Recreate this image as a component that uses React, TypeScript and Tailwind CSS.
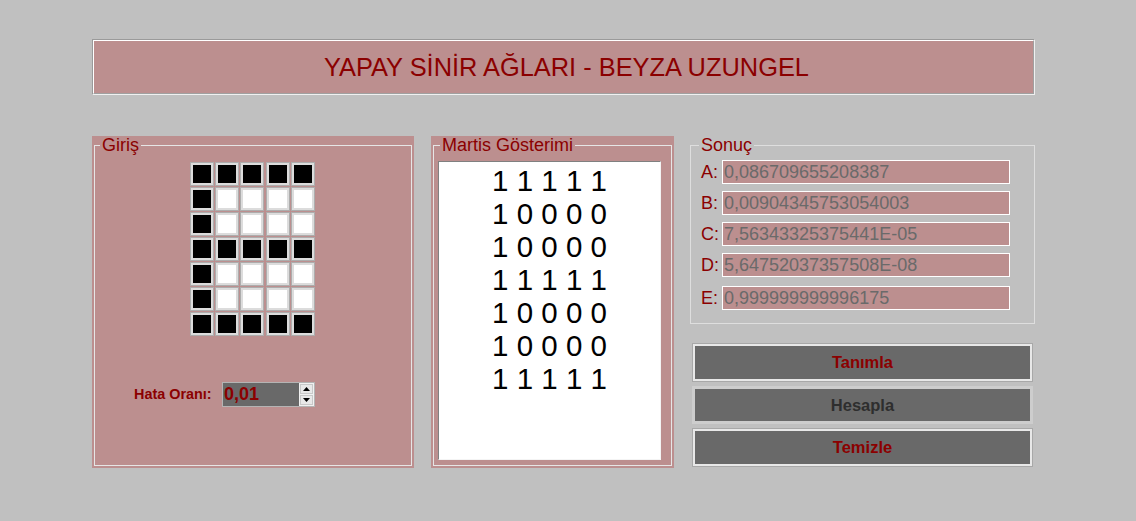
const font = { fontFamily: '"Liberation Sans", Arial, sans-serif' };

// E harfi: 1 = siyah, 0 = beyaz
const pattern = [
  [1, 1, 1, 1, 1],
  [1, 0, 0, 0, 0],
  [1, 0, 0, 0, 0],
  [1, 1, 1, 1, 1],
  [1, 0, 0, 0, 0],
  [1, 0, 0, 0, 0],
  [1, 1, 1, 1, 1],
];

const results = [
  { key: 'A', value: '0,086709655208387', gap: 'mt-[6px]' },
  { key: 'B', value: '0,00904345753054003', gap: 'mt-[7px]' },
  { key: 'C', value: '7,56343325375441E-05', gap: 'mt-[7px]' },
  { key: 'D', value: '5,64752037357508E-08', gap: 'mt-[7px]' },
  { key: 'E', value: '0,999999999996175', gap: 'mt-[9px]' },
];

function Cell({ on }: { on: number }) {
  return (
    <div className="w-[24px] h-[24px] border border-[#adadad] bg-[#dcdcdc] p-[2px]">
      <div className={on ? 'w-full h-full bg-black' : 'w-full h-full bg-white'} />
    </div>
  );
}

export default function App() {
  return (
    <div className="w-[1136px] h-[521px] bg-[#c0c0c0] pt-[39px] pl-[92px]" style={font}>
      {/* başlık */}
      <div className="w-[943px] h-[56px] border border-[#9a9a9a] border-b-[#f0f0f0] border-r-[#f0f0f0]">
        <div className="w-full h-full border border-white border-b-[#a0a0a0] border-r-[#a0a0a0] bg-[#bc8f8f] flex items-center justify-center">
          <h1 className="text-[25.4px] leading-none text-[#8b0000] mt-[2px] ml-[6px]">YAPAY SİNİR AĞLARI - BEYZA UZUNGEL</h1>
        </div>
      </div>

      <div className="flex items-start mt-[41px]">
        {/* Giriş */}
        <div className="w-[322px] h-[332px] bg-[#bc8f8f] px-[2px] pb-[2px]">
          <fieldset className="h-full border border-[#e6e6e6]">
            <legend className="ml-[5px] px-[2px] text-[18px] leading-[18px] text-[#8b0000]">Giriş</legend>
            <div className="ml-[95px] mt-[8px] grid grid-cols-5 w-[125px] gap-px">
              {pattern.flat().map((v, i) => (
                <Cell key={i} on={v} />
              ))}
            </div>
            <div className="flex items-center ml-[39px] mt-[46px]">
              <span className="text-[14.4px] font-bold text-[#8b0000] w-[88px]">Hata Oranı:</span>
              <div className="flex w-[93px] h-[25px] border border-[#b4b4b4] bg-[#696969]">
                <span className="flex-1 pl-[1px] text-[18px] font-bold leading-[23px] text-[#8b0000]">0,01</span>
                <div className="w-[15px] bg-[#f0f0f0] flex flex-col justify-center gap-px py-px">
                  <div className="h-[10px] mx-px border border-[#c8c8c8] bg-[#e8e8e8] flex items-center justify-center">
                    <svg width="7" height="4" viewBox="0 0 7 4"><path d="M0 4 L3.5 0 L7 4 Z" fill="#000" /></svg>
                  </div>
                  <div className="h-[10px] mx-px border border-[#c8c8c8] bg-[#e8e8e8] flex items-center justify-center">
                    <svg width="7" height="4" viewBox="0 0 7 4"><path d="M0 0 L3.5 4 L7 0 Z" fill="#000" /></svg>
                  </div>
                </div>
              </div>
            </div>
          </fieldset>
        </div>

        {/* Martis Gösterimi */}
        <div className="w-[243px] h-[332px] bg-[#bc8f8f] px-[2px] pb-[2px] ml-[17px]">
          <fieldset className="h-full border border-[#e6e6e6]">
            <legend className="ml-[6px] px-[2px] text-[18px] leading-[18px] text-[#8b0000]">Martis Gösterimi</legend>
            <div className="ml-[4px] mt-[7px] w-[223px] h-[299px] bg-white border border-[#808080] border-b-[#f4f4f4] border-r-[#f4f4f4] pt-[2px] text-center text-[29.5px] leading-[33px] text-black whitespace-pre">
              {pattern.map((row, i) => (
                <div key={i}>{row.join(' ')}</div>
              ))}
            </div>
          </fieldset>
        </div>

        {/* Sonuç + butonlar */}
        <div className="w-[345px] ml-[16px]">
          <fieldset className="h-[188px] border border-[#dedede]">
            <legend className="ml-[8px] px-[2px] text-[18px] leading-[18px] text-[#8b0000]">Sonuç</legend>
            {results.map((r) => (
              <div key={r.key} className={`flex items-center pl-[10px] ${r.gap}`}>
                <span className="w-[21px] text-[18px] leading-none text-[#8b0000]">{r.key}:</span>
                <div className="w-[288px] h-[24px] border border-white bg-[#bc8f8f] pl-[1px] text-[18px] leading-[22px] text-[#6a6a6a]">
                  {r.value}
                </div>
              </div>
            ))}
          </fieldset>

          <div className="flex flex-col gap-[4px] mt-[19px] px-[2px]">
            <button className="h-[39px] border border-[#a8a8a8] bg-[#e8e8e8] p-[2px] cursor-pointer">
              <div className="w-full h-full bg-[#696969] flex items-center justify-center text-[16.5px] font-bold text-[#8b0000]">Tanımla</div>
            </button>
            <button className="h-[38px] bg-[#cdcdcd] p-[3px] cursor-pointer">
              <div className="w-full h-full bg-[#696969] flex items-center justify-center text-[16.5px] font-bold text-[#2e2e2e]">Hesapla</div>
            </button>
            <button className="h-[39px] border border-[#a8a8a8] bg-[#e8e8e8] p-[2px] cursor-pointer">
              <div className="w-full h-full bg-[#696969] flex items-center justify-center text-[16.5px] font-bold text-[#8b0000]">Temizle</div>
            </button>
          </div>
        </div>
      </div>
    </div>
  );
}
